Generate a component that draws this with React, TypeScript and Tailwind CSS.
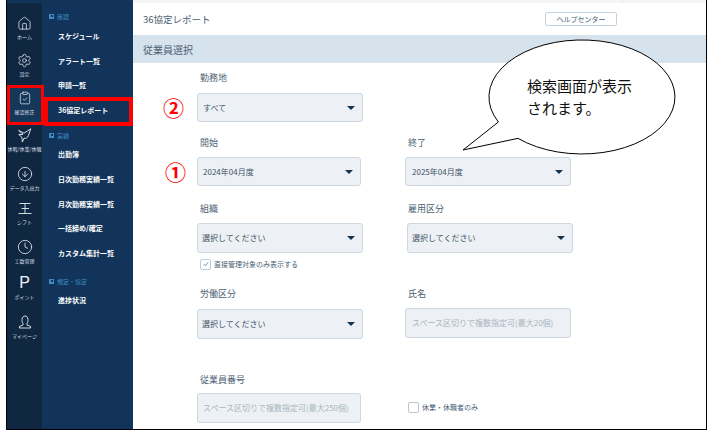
import { CircleArrowDown, Clock, ClipboardCheck, House, Settings } from "lucide-react";
import type { ReactNode } from "react";

const font = "font-['Noto_Sans_CJK_JP','Noto_Sans',sans-serif]";

function BirdIcon() {
  return (
    <svg width="14" height="15" viewBox="0 0 14 15" fill="none" stroke="#e8eef4" strokeWidth="0.9" strokeLinejoin="round">
      <path d="M0.6 2.4 L6 5.2 L12.8 0.8 L10.4 7.6 C9.6 10 7.6 10.8 6 10.2 L4.4 14 L3.8 9.2 L0.8 6.6 L5 6.4 Z" />
    </svg>
  );
}

function ShiftIcon() {
  return (
    <svg width="14" height="13" viewBox="0 0 14 13" fill="none" stroke="#e8eef4" strokeWidth="0.9">
      <path d="M1.5 1.5 H12.5 M3.5 6.5 H11 M0.5 11.5 H13.5 M7 1.5 V11.5" />
    </svg>
  );
}

function UserIcon() {
  return (
    <svg width="14" height="14" viewBox="0 0 14 14" fill="none" stroke="#e8eef4" strokeWidth="0.9">
      <path d="M5 8.6 C3.4 6.8 3.4 1 7 1 C10.6 1 10.6 6.8 9 8.6 L9 10 L12.6 11.4 L12.6 13 H1.4 L1.4 11.4 L5 10 Z" />
    </svg>
  );
}

const railItems: { label: string; icon: ReactNode; h: string }[] = [
  { label: "ホーム", icon: <House size={15} strokeWidth={1.2} color="#e8eef4" />, h: "h-[37px]" },
  { label: "設定", icon: <Settings size={15} strokeWidth={1.2} color="#e8eef4" />, h: "h-[38px]" },
  { label: "確認修正", icon: <ClipboardCheck size={14} strokeWidth={1.2} color="#e8eef4" />, h: "h-[37px] bg-[#15375a]" },
  { label: "休暇/休業/休職", icon: <BirdIcon />, h: "h-[39px]" },
  { label: "データ入出力", icon: <CircleArrowDown size={16} strokeWidth={1.2} color="#e8eef4" />, h: "h-[34px]" },
  { label: "シフト", icon: <ShiftIcon />, h: "h-[39px]" },
  { label: "工数管理", icon: <Clock size={16} strokeWidth={1.2} color="#e8eef4" />, h: "h-[36px]" },
  { label: "ポイント", icon: <span className="text-[16px] leading-[16px] text-[#f2f5f8] font-['Liberation_Sans',sans-serif]">P</span>, h: "h-[39px]" },
  { label: "マイページ", icon: <UserIcon />, h: "h-[38px]" },
];

const menu: { head?: string; label?: string; mt: string }[] = [
  { head: "確認", mt: "mt-0" },
  { label: "スケジュール", mt: "mt-[8px]" },
  { label: "アラート一覧", mt: "mt-[13px]" },
  { label: "申請一覧", mt: "mt-[12px]" },
  { label: "36協定レポート", mt: "mt-[13px]" },
  { head: "実績", mt: "mt-[13px]" },
  { label: "出勤簿", mt: "mt-[7px]" },
  { label: "日次勤務実績一覧", mt: "mt-[13px]" },
  { label: "月次勤務実績一覧", mt: "mt-[13px]" },
  { label: "一括締め/確定", mt: "mt-[12px]" },
  { label: "カスタム集計一覧", mt: "mt-[13px]" },
  { head: "規定・協定", mt: "mt-[16px]" },
  { label: "進捗状況", mt: "mt-[7px]" },
];

function Label({ children }: { children: ReactNode }) {
  return <div className="h-[14px] pl-[3px] text-[9px] leading-[14px] text-[#4a5f73]">{children}</div>;
}

function Box({ text, w = "w-[166px]", h = "h-[30px]", caret = true, pl = "pl-[5px]" }: { text: string; w?: string; h?: string; caret?: boolean; pl?: string }) {
  return (
    <div className={`${w} ${h} ${pl} flex items-center justify-between rounded-[3px] border border-[#cdd7df] bg-[#edf1f5] pr-[6px]`}>
      <span className={caret ? "text-[8px] text-[#3d5266]" : "text-[8px] whitespace-nowrap text-[#a9b4bf]"}>{text}</span>
      {caret && <span className="mr-[1px] h-0 w-0 border-x-[4px] border-t-[4px] border-x-transparent border-t-[#17324f]" />}
    </div>
  );
}

export default function App() {
  return (
    <div className={`relative h-[439px] w-[715px] overflow-hidden bg-white ${font}`}>
      <div className="ml-[6px] flex h-[430px] w-[701px] border-x border-b border-black">
        <div className="flex w-[126px] shrink-0 bg-[#12345a] pt-[3px]">
          {/* icon rail */}
          <div className="w-[35px] shrink-0 bg-[#0f2740] pt-[10px]">
            {railItems.map((item) => (
              <div key={item.label} className={`${item.h} flex flex-col items-center`}>
                <div className="flex h-[20px] items-center justify-center">{item.icon}</div>
                <div className="text-[5px] leading-[7px] whitespace-nowrap text-[#d5dde5]">{item.label}</div>
              </div>
            ))}
          </div>
          {/* sub menu */}
          <div className="flex-1 pt-[7px]">
            {menu.map((m) =>
              m.head ? (
                <div key={m.head} className={`${m.mt} flex h-[12px] items-center gap-[3px] pl-[7px]`}>
                  <span className="flex h-[5px] w-[5px] items-center justify-center bg-[#3d8cc4]">
                    <span className="h-[2px] w-[2px] bg-[#12345a]" />
                  </span>
                  <span className="text-[6px] text-[#3d8cc4]">{m.head}</span>
                </div>
              ) : (
                <div key={m.label} className={`${m.mt} flex h-[12px] items-center pl-[16px] text-[7px] font-bold whitespace-nowrap text-white`}>
                  {m.label}
                </div>
              ),
            )}
          </div>
        </div>

        <div className="min-w-0 flex-1">
          <div className="h-[3px] bg-[#f4f5f6]">
            <div className="h-[3px] w-[490px] border-r border-[#e3e6e9]" />
          </div>
          <div className="flex h-[32px] items-center justify-between pr-[89px] pl-[10px]">
            <span className="text-[9.5px] text-[#4a5f73]">36協定レポート</span>
            <span className="flex h-[14px] w-[72px] items-center justify-center rounded-[2px] border border-[#c5d2dc] text-[7px] text-[#4a5f73]">ヘルプセンター</span>
          </div>
          <div className="flex h-[28px] items-center bg-[#d6e2ec] pl-[10px] text-[10px] text-[#4a5f73]">従業員選択</div>

          <div className="pt-[8px] pl-[64px]">
            <Label>勤務地</Label>
            <div className="mt-[8px]"><Box text="すべて" h="h-[29px]" /></div>

            <div className="mt-[14px] flex">
              <div className="w-[208px]">
                <Label>開始</Label>
                <div className="mt-[7px]"><Box text="2024年04月度" w="w-[164px]" h="h-[29px]" /></div>
              </div>
              <div>
                <Label>終了</Label>
                <div className="mt-[7px]"><Box text="2025年04月度" h="h-[29px]" pl="pl-[6px]" /></div>
              </div>
            </div>

            <div className="mt-[16px] flex">
              <div className="w-[208px]">
                <Label>組織</Label>
                <div className="mt-[7px]"><Box text="選択してください" pl="pl-[4px]" /></div>
              </div>
              <div>
                <Label>雇用区分</Label>
                <div className="mt-[7px] ml-[2px]"><Box text="選択してください" pl="pl-[4px]" /></div>
              </div>
            </div>

            <div className="mt-[5px] flex h-[12px] items-center gap-[3px] pl-[3px] text-[7px] text-[#4a5f73]">
              <span className="flex h-[11px] w-[11px] items-center justify-center rounded-[2px] border border-[#b9cddd] bg-white">
                <svg width="6" height="6" viewBox="0 0 6 6" fill="none" stroke="#3d5266" strokeWidth="0.7"><path d="M1 3.2 L2.4 4.6 L5 1.4" /></svg>
              </span>
              直接管理対象のみ表示する
            </div>

            <div className="mt-[17px] flex">
              <div className="w-[208px]">
                <Label>労働区分</Label>
                <div className="mt-[8px]"><Box text="選択してください" pl="pl-[4px]" /></div>
              </div>
              <div>
                <Label>氏名</Label>
                <div className="mt-[7px]"><Box text="スペース区切りで複数指定可(最大20個)" caret={false} pl="pl-[6px]" /></div>
              </div>
            </div>

            <div className="mt-[34px] flex items-end">
              <div className="w-[211px]">
                <Label>従業員番号</Label>
                <div className="mt-[6px]"><Box text="スペース区切りで複数指定可(最大250個)" w="w-[164px]" caret={false} /></div>
              </div>
              <div className="mb-[10px] flex items-center gap-[3px] text-[7px] text-[#4a5f73]">
                <span className="h-[11px] w-[11px] rounded-[2px] border border-[#b9c6d2] bg-white" />
                休業・休職者のみ
              </div>
            </div>
          </div>
        </div>
      </div>

      {/* red highlights over the menu */}
      <div className="absolute top-[85px] left-[7px] h-[40px] w-[37px] border-[3px] border-[#ff0000]" />
      <div className="absolute top-[97px] left-[44px] h-[29px] w-[89px] border-[4px] border-[#ff0000]" />

      {/* circled steps */}
      <span className="absolute top-[91px] left-[163px] text-[21px] leading-[32px] font-bold text-[#ff0000]">②</span>
      <span className="absolute top-[155px] left-[165px] text-[21px] leading-[32px] font-bold text-[#ff0000]">①</span>

      {/* callout */}
      <svg className="absolute top-0 left-0" width="715" height="439" fill="none">
        <path d="M498.4 122 A93 57 0 1 1 518 138.35 L463 150 Z" fill="white" stroke="#000" strokeWidth="1" />
      </svg>
      <div className="absolute top-[75px] left-[527px] w-[112px] text-[15px] leading-[22px] text-[#111]">
        検索画面が表示されます。
      </div>
    </div>
  );
}
